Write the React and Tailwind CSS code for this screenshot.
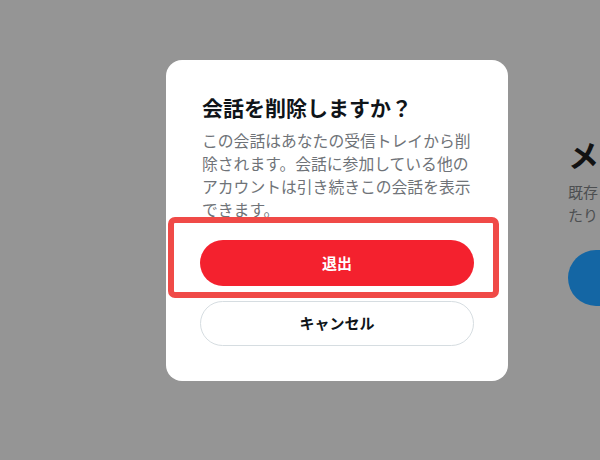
const jp = { fontFamily: '"Noto Sans CJK JP", "Noto Sans", sans-serif' };

const App = () => {
  return (
    <div
      className="relative w-[600px] h-[460px] overflow-hidden bg-[#959595]"
      style={jp}
    >
      {/* Messages page behind the modal (dimmed) */}
      <div className="flex flex-col pl-[568px] pt-[134px] whitespace-nowrap">
        <h2 className="text-[31px] leading-[40px] font-bold text-[#121212]">
          メ
        </h2>
        <p className="mt-[6px] text-[15px] leading-[23px] text-[#4d4f51]">
          既存
          <br />
          たり
        </p>
        <div className="mt-[24px] h-[56px] w-[32px] rounded-l-full bg-[#1466a4]" />
      </div>

      {/* Modal layer */}
      <div className="absolute inset-0 flex items-start pl-[166px] pt-[60px]">
        <div className="relative w-[342px] rounded-[16px] bg-white px-[34px] pt-[35px] pb-[35px]">
          <h1 className="pl-[2px] text-[21px] leading-[24px] font-bold text-[#0f1419]">
            会話を削除しますか？
          </h1>
          <p className="mt-[10px] pl-[2px] text-[15.8px] leading-[23px] text-[#6f7378]">
            この会話はあなたの受信トレイから削除されます。会話に参加している他のアカウントは引き続きこの会話を表示できます。
          </p>
          <div className="mt-[19px] flex flex-col gap-[15px]">
            <button className="h-[46px] rounded-full bg-[#f4212e] text-[15px] font-bold text-white">
              退出
            </button>
            <button className="h-[45px] rounded-full border border-[#d6dde1] bg-white text-[15px] font-bold text-[#0f1419]">
              キャンセル
            </button>
          </div>

          {/* Highlight frame around the leave button */}
          <div className="pointer-events-none absolute left-[2px] top-[157px] h-[81px] w-[331px] rounded-[7px] border-[6px] border-[#f04a47]" />
        </div>
      </div>
    </div>
  );
};

export default App;
